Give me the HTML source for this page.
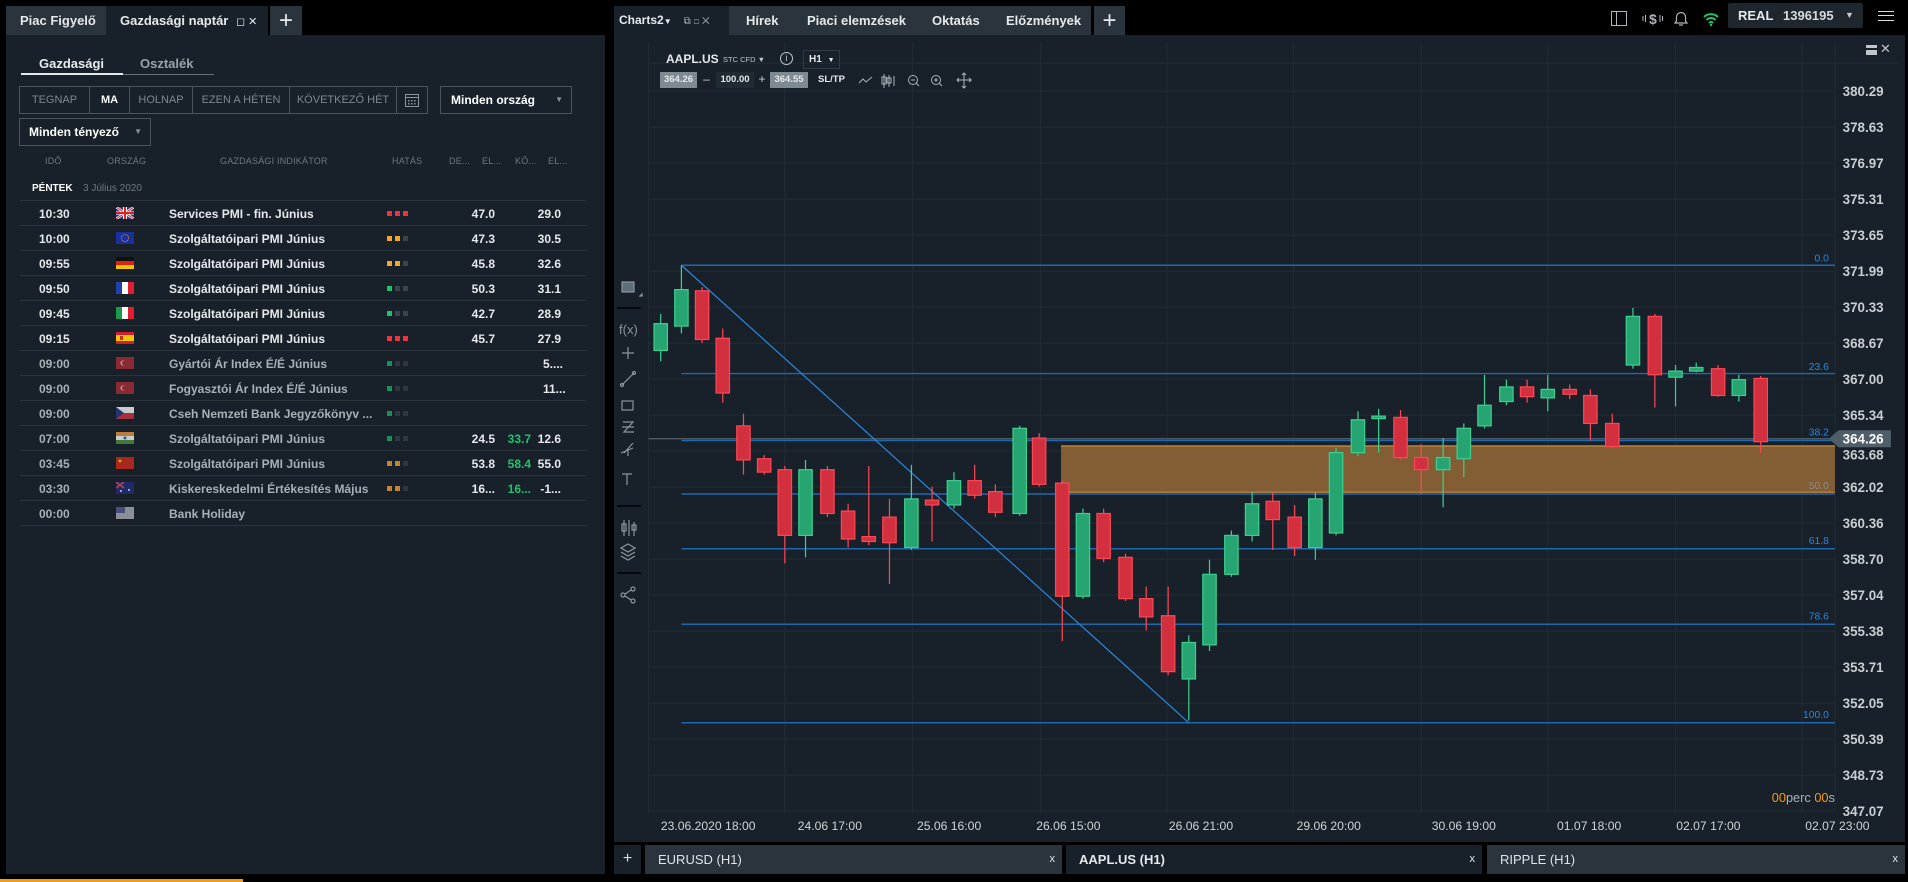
<!DOCTYPE html>
<html><head><meta charset="utf-8">
<style>
*{margin:0;padding:0;box-sizing:border-box}
body{width:1908px;height:882px;background:#000;position:relative;overflow:hidden;font-family:"Liberation Sans",sans-serif;color:#e6e9eb}
.a{position:absolute;white-space:nowrap}
.tab{position:absolute;background:#2a343c;height:29px;top:6px;font-weight:bold;font-size:13px;line-height:29px;color:#e6e9eb;white-space:nowrap}
.panel{position:absolute;background:#18212a}
.btn{position:absolute;border:1px solid #4a545c;height:28px;top:86px;font-size:11px;line-height:26px;text-align:center;color:#7e878d;white-space:nowrap;overflow:hidden}
.hd{position:absolute;top:156px;font-size:9px;color:#6e787e;letter-spacing:.2px;white-space:nowrap}
.row{position:absolute;left:20px;width:566px;height:25px;border-bottom:1px solid #2a333a}
.row span{position:absolute;top:6px;font-size:12px;font-weight:bold;white-space:nowrap}
.dots{position:absolute;top:10px;left:367px;line-height:0;font-size:0}
.dots i{display:inline-block;width:5px;height:5px;margin-right:3px}
.fl{position:absolute;left:96px;top:6px;width:18px;height:12px}
.pl{font-size:13.5px;fill:#c9ced1;font-family:"Liberation Sans",sans-serif;font-weight:bold}
.ax{font-size:10px;fill:#d0d4d6;font-family:"Liberation Sans",sans-serif}
.fb{font-size:8.5px;fill:#2a86dc;font-family:"Liberation Sans",sans-serif}
</style></head><body>

<div class="tab" style="left:6px;width:100px;padding-left:14px;color:#e6e9eb">Piac Figyelő</div>
<div class="tab" style="left:106px;width:162px;background:#18212a;padding-left:14px">Gazdasági naptár <span style="font-weight:normal;font-size:11px;margin-left:4px">&#9723;&nbsp;✕</span></div>
<div class="tab" style="left:270px;width:32px;text-align:center;font-size:24px;font-weight:normal">+</div>

<div class="panel" style="left:6px;top:35px;width:599px;height:839px"></div>
<div class="a" style="left:39px;top:56px;font-size:13px;font-weight:bold;color:#e9ecee">Gazdasági</div>
<div class="a" style="left:140px;top:56px;font-size:13px;font-weight:bold;color:#9aa2a7">Osztalék</div>
<div class="a" style="left:21px;top:73px;width:102px;height:2px;background:#e6e9eb"></div>
<div class="a" style="left:123px;top:74px;width:91px;height:1px;background:#6a737a"></div>

<div class="btn" style="left:19px;width:71px">TEGNAP</div>
<div class="btn" style="left:89px;width:41px;color:#fff;font-weight:bold">MA</div>
<div class="btn" style="left:129px;width:64px">HOLNAP</div>
<div class="btn" style="left:192px;width:98px">EZEN A HÉTEN</div>
<div class="btn" style="left:289px;width:108px">KÖVETKEZŐ HÉT</div>
<div class="btn" style="left:396px;width:32px"><svg width="16" height="16" viewBox="0 0 16 16" style="margin-top:5px"><rect x="1.5" y="2.5" width="13" height="12" fill="none" stroke="#8a9398"/><line x1="1.5" y1="5.5" x2="14.5" y2="5.5" stroke="#8a9398"/><g fill="#8a9398"><rect x="4" y="8" width="1.5" height="1.5"/><rect x="7" y="8" width="1.5" height="1.5"/><rect x="10" y="8" width="1.5" height="1.5"/><rect x="4" y="11" width="1.5" height="1.5"/><rect x="7" y="11" width="1.5" height="1.5"/><rect x="10" y="11" width="1.5" height="1.5"/></g></svg></div>
<div class="btn" style="left:440px;width:132px;text-align:left;padding-left:10px;color:#fff;font-weight:bold;font-size:12px">Minden ország<span style="position:absolute;right:8px;color:#8a9398;font-size:8px">▼</span></div>
<div class="btn" style="left:19px;top:118px;width:132px;text-align:left;padding-left:9px;color:#fff;font-weight:bold;font-size:12px">Minden tényező<span style="position:absolute;right:8px;color:#8a9398;font-size:8px">▼</span></div>

<div class="hd" style="left:45px">IDŐ</div>
<div class="hd" style="left:107px">ORSZÁG</div>
<div class="hd" style="left:220px">GAZDASÁGI INDIKÁTOR</div>
<div class="hd" style="left:392px">HATÁS</div>
<div class="hd" style="left:449px">DE...</div>
<div class="hd" style="left:482px">EL...</div>
<div class="hd" style="left:515px">KŐ...</div>
<div class="hd" style="left:548px">EL...</div>

<div class="a" style="left:32px;top:183px;font-size:10px;font-weight:bold;color:#fff">PÉNTEK</div>
<div class="a" style="left:83px;top:183px;font-size:10px;color:#6e787e">3 Július 2020</div>
<div class="a" style="left:20px;top:200px;width:566px;height:1px;background:#2a333a"></div>

<div class="row" style="top:201px"><span style="left:19px">10:30</span><svg class="fl" viewBox="0 0 18 12"><rect width="18" height="12" fill="#1f3a8a"/><path d="M0 0L18 12M18 0L0 12" stroke="#fff" stroke-width="2.5"/><path d="M0 0L18 12M18 0L0 12" stroke="#d22" stroke-width="1"/><rect x="7" width="4" height="12" fill="#fff"/><rect y="4.5" width="18" height="3" fill="#fff"/><rect x="8" width="2" height="12" fill="#d22"/><rect y="5" width="18" height="2" fill="#d22"/></svg><span style="left:149px">Services PMI - fin. Június</span><div class="dots"><i style="background:#f0323f"></i><i style="background:#f0323f"></i><i style="background:#f0323f"></i></div><span style="right:91px">47.0</span><span style="right:25px">29.0</span></div>
<div class="row" style="top:226px"><span style="left:19px">10:00</span><svg class="fl" viewBox="0 0 18 12"><rect width="18" height="12" fill="#1c2fa0"/><circle cx="9" cy="6" r="3.5" fill="none" stroke="#e8c020" stroke-width=".8" stroke-dasharray="1 1"/></svg><span style="left:149px">Szolgáltatóipari PMI Június</span><div class="dots"><i style="background:#f5a623"></i><i style="background:#f5a623"></i><i style="background:#3a444c"></i></div><span style="right:91px">47.3</span><span style="right:25px">30.5</span></div>
<div class="row" style="top:251px"><span style="left:19px">09:55</span><svg class="fl" viewBox="0 0 18 12"><rect width="18" height="4" fill="#111"/><rect y="4" width="18" height="4" fill="#d21"/><rect y="8" width="18" height="4" fill="#f5c400"/></svg><span style="left:149px">Szolgáltatóipari PMI Június</span><div class="dots"><i style="background:#f5a623"></i><i style="background:#f5a623"></i><i style="background:#3a444c"></i></div><span style="right:91px">45.8</span><span style="right:25px">32.6</span></div>
<div class="row" style="top:276px"><span style="left:19px">09:50</span><svg class="fl" viewBox="0 0 18 12"><rect width="6" height="12" fill="#2340a8"/><rect x="6" width="6" height="12" fill="#fff"/><rect x="12" width="6" height="12" fill="#e21d2d"/></svg><span style="left:149px">Szolgáltatóipari PMI Június</span><div class="dots"><i style="background:#1fc26b"></i><i style="background:#3a444c"></i><i style="background:#3a444c"></i></div><span style="right:91px">50.3</span><span style="right:25px">31.1</span></div>
<div class="row" style="top:301px"><span style="left:19px">09:45</span><svg class="fl" viewBox="0 0 18 12"><rect width="6" height="12" fill="#1a9a4a"/><rect x="6" width="6" height="12" fill="#fff"/><rect x="12" width="6" height="12" fill="#e21d2d"/></svg><span style="left:149px">Szolgáltatóipari PMI Június</span><div class="dots"><i style="background:#1fc26b"></i><i style="background:#3a444c"></i><i style="background:#3a444c"></i></div><span style="right:91px">42.7</span><span style="right:25px">28.9</span></div>
<div class="row" style="top:326px"><span style="left:19px">09:15</span><svg class="fl" viewBox="0 0 18 12"><rect width="18" height="12" fill="#d21e2b"/><rect y="3" width="18" height="6" fill="#f5c400"/><rect x="4" y="4" width="3" height="4" fill="#b33"/></svg><span style="left:149px">Szolgáltatóipari PMI Június</span><div class="dots"><i style="background:#f0323f"></i><i style="background:#f0323f"></i><i style="background:#f0323f"></i></div><span style="right:91px">45.7</span><span style="right:25px">27.9</span></div>
<div class="row" style="top:351px"><span style="left:19px;color:#a8b0b5">09:00</span><svg class="fl" viewBox="0 0 18 12"><rect width="18" height="12" fill="#8a2a33"/><circle cx="7" cy="6" r="2.5" fill="#c9a0a4"/><circle cx="7.8" cy="6" r="2" fill="#8a2a33"/></svg><span style="left:149px;color:#a8b0b5">Gyártói Ár Index É/É Június</span><div class="dots"><i style="background:#16915a"></i><i style="background:#2e383f"></i><i style="background:#2e383f"></i></div><span style="left:523px">5....</span></div>
<div class="row" style="top:376px"><span style="left:19px;color:#a8b0b5">09:00</span><svg class="fl" viewBox="0 0 18 12"><rect width="18" height="12" fill="#8a2a33"/><circle cx="7" cy="6" r="2.5" fill="#c9a0a4"/><circle cx="7.8" cy="6" r="2" fill="#8a2a33"/></svg><span style="left:149px;color:#a8b0b5">Fogyasztói Ár Index É/É Június</span><div class="dots"><i style="background:#16915a"></i><i style="background:#2e383f"></i><i style="background:#2e383f"></i></div><span style="left:523px">11...</span></div>
<div class="row" style="top:401px"><span style="left:19px;color:#a8b0b5">09:00</span><svg class="fl" viewBox="0 0 18 12"><rect width="18" height="6" fill="#c8cbd0"/><rect y="6" width="18" height="6" fill="#a8303a"/><path d="M0 0L8 6L0 12Z" fill="#25346a"/></svg><span style="left:149px;color:#a8b0b5">Cseh Nemzeti Bank Jegyzőkönyv ...</span><div class="dots"><i style="background:#16915a"></i><i style="background:#2e383f"></i><i style="background:#2e383f"></i></div></div>
<div class="row" style="top:426px"><span style="left:19px;color:#a8b0b5">07:00</span><svg class="fl" viewBox="0 0 18 12"><rect width="18" height="4" fill="#c07a3a"/><rect y="4" width="18" height="4" fill="#c8cbd0"/><rect y="8" width="18" height="4" fill="#3f7a3a"/><circle cx="9" cy="6" r="1.5" fill="#34509a"/></svg><span style="left:149px;color:#a8b0b5">Szolgáltatóipari PMI Június</span><div class="dots"><i style="background:#16915a"></i><i style="background:#2e383f"></i><i style="background:#2e383f"></i></div><span style="right:91px">24.5</span><span style="right:55px;color:#1fc26b">33.7</span><span style="right:25px">12.6</span></div>
<div class="row" style="top:451px"><span style="left:19px;color:#a8b0b5">03:45</span><svg class="fl" viewBox="0 0 18 12"><rect width="18" height="12" fill="#a8281e"/><circle cx="4" cy="4" r="1.5" fill="#c9a030"/></svg><span style="left:149px;color:#a8b0b5">Szolgáltatóipari PMI Június</span><div class="dots"><i style="background:#c0822a"></i><i style="background:#c0822a"></i><i style="background:#2e383f"></i></div><span style="right:91px">53.8</span><span style="right:55px;color:#1fc26b">58.4</span><span style="right:25px">55.0</span></div>
<div class="row" style="top:476px"><span style="left:19px;color:#a8b0b5">03:30</span><svg class="fl" viewBox="0 0 18 12"><rect width="18" height="12" fill="#1e2a6a"/><path d="M0 0L8 6M8 0L0 6" stroke="#c04050" stroke-width="1.5"/><circle cx="13" cy="8" r="1" fill="#ccc"/><circle cx="5" cy="9" r="1" fill="#ccc"/></svg><span style="left:149px;color:#a8b0b5">Kiskereskedelmi Értékesítés Május</span><div class="dots"><i style="background:#c0822a"></i><i style="background:#c0822a"></i><i style="background:#2e383f"></i></div><span style="right:91px">16...</span><span style="right:55px;color:#1fc26b">16...</span><span style="right:25px">-1...</span></div>
<div class="row" style="top:501px"><span style="left:19px;color:#a8b0b5">00:00</span><svg class="fl" viewBox="0 0 18 12"><rect width="18" height="12" fill="#8a8e96"/><rect width="9" height="6" fill="#46507a"/></svg><span style="left:149px;color:#a8b0b5">Bank Holiday</span></div>

<div class="tab" style="left:614px;width:115px;background:#18212a;font-size:12px;padding-left:5px">Charts2<span style="font-size:8px">▼</span><span style="font-weight:normal;font-size:10px;color:#aab2b7;margin-left:12px">⧉ &#9723; ✕</span></div>
<div class="tab" style="left:729px;width:362px;font-size:13px"><span style="position:absolute;left:17px">Hírek</span><span style="position:absolute;left:78px">Piaci elemzések</span><span style="position:absolute;left:203px">Oktatás</span><span style="position:absolute;left:277px">Előzmények</span></div>
<div class="tab" style="left:1094px;width:31px;text-align:center;font-size:24px;font-weight:normal">+</div>

<svg class="a" style="left:1608px;top:8px" width="120" height="22" viewBox="0 0 120 22">
<rect x="3.5" y="3.5" width="15" height="14" fill="none" stroke="#aeb5ba"/><line x1="8.5" y1="3.5" x2="8.5" y2="17.5" stroke="#aeb5ba"/>
<text x="41" y="16" font-size="14" fill="#aeb5ba" font-weight="bold" font-family="Liberation Sans">$</text><g stroke="#aeb5ba"><line x1="35" y1="8" x2="35" y2="13"/><line x1="37.5" y1="7" x2="37.5" y2="14"/><line x1="52" y1="7" x2="52" y2="14"/><line x1="54.5" y1="8" x2="54.5" y2="13"/></g>
<path d="M67 15h12l-1.5-2v-4a4.5 4.5 0 0 0-9 0v4z M71 17h4" fill="none" stroke="#aeb5ba" stroke-width="1.2"/>
<path d="M96 9a10 10 0 0 1 14 0M98.5 12a6 6 0 0 1 9 0M101 15a2.5 2.5 0 0 1 4 0" fill="none" stroke="#1fc26b" stroke-width="2"/><circle cx="103" cy="17" r="1.2" fill="#1fc26b"/>
</svg>
<div class="a" style="left:1728px;top:3px;width:135px;height:25px;background:#1e272e;border-radius:2px;font-family:'Liberation Sans',sans-serif;font-size:13px;line-height:25px"><b style="position:absolute;left:10px">REAL</b><span style="position:absolute;left:55px;font-weight:bold;color:#d8dcde">1396195</span><span style="position:absolute;left:117px;font-size:9px;color:#ccc">▼</span></div>
<div class="a" style="left:1878px;top:11px;width:16px;height:10px;border-top:1px solid #ddd;border-bottom:1px solid #ddd"></div>
<div class="a" style="left:1878px;top:15px;width:16px;height:1px;background:#ddd"></div>

<div class="panel" style="left:614px;top:35px;width:1291px;height:807px"></div>
<div class="a" style="left:610px;top:35px;width:4px;height:807px;background:#000"></div>

<svg class="a" style="left:0;top:0" width="1908" height="882">
<defs><clipPath id="c"><rect x="533" y="35" width="975" height="634"/></clipPath></defs>
<g transform="scale(1.2168)">
<g stroke="#212c34" stroke-width="0.8">
<line x1="533" y1="52" x2="1560" y2="52"/>
<line x1="533" y1="75" x2="1508" y2="75"/><line x1="533" y1="104.6" x2="1508" y2="104.6"/><line x1="533" y1="134.2" x2="1508" y2="134.2"/><line x1="533" y1="163.7" x2="1508" y2="163.7"/><line x1="533" y1="193.3" x2="1508" y2="193.3"/><line x1="533" y1="222.9" x2="1508" y2="222.9"/><line x1="533" y1="252.5" x2="1508" y2="252.5"/><line x1="533" y1="282.1" x2="1508" y2="282.1"/><line x1="533" y1="311.6" x2="1508" y2="311.6"/><line x1="533" y1="341.2" x2="1508" y2="341.2"/><line x1="533" y1="370.8" x2="1508" y2="370.8"/><line x1="533" y1="400.4" x2="1508" y2="400.4"/><line x1="533" y1="430" x2="1508" y2="430"/><line x1="533" y1="459.5" x2="1508" y2="459.5"/><line x1="533" y1="489.1" x2="1508" y2="489.1"/><line x1="533" y1="518.7" x2="1508" y2="518.7"/><line x1="533" y1="548.3" x2="1508" y2="548.3"/><line x1="533" y1="577.9" x2="1508" y2="577.9"/><line x1="533" y1="607.4" x2="1508" y2="607.4"/><line x1="533" y1="637" x2="1508" y2="637"/><line x1="533" y1="666.6" x2="1508" y2="666.6"/>
<line x1="533" y1="35" x2="533" y2="668"/><line x1="645" y1="35" x2="645" y2="668"/><line x1="750" y1="35" x2="750" y2="668"/><line x1="855" y1="35" x2="855" y2="668"/><line x1="959" y1="35" x2="959" y2="668"/><line x1="1063" y1="35" x2="1063" y2="668"/><line x1="1168" y1="35" x2="1168" y2="668"/><line x1="1272" y1="35" x2="1272" y2="668"/><line x1="1377" y1="35" x2="1377" y2="668"/><line x1="1481" y1="35" x2="1481" y2="668"/><line x1="1508" y1="35" x2="1508" y2="668"/>
</g>
<g clip-path="url(#c)">
<rect x="872" y="366" width="636" height="39" fill="#835e34"/>
<line x1="872" y1="366.5" x2="1508" y2="366.5" stroke="#c88a3a" stroke-width="1"/>
<line x1="872" y1="404.5" x2="1508" y2="404.5" stroke="#c88a3a" stroke-width="1"/>
<line x1="533" y1="360.6" x2="1508" y2="360.6" stroke="#55616a" stroke-width="1"/>
<g stroke="#1f67ad" stroke-width="1.2">
<line x1="560" y1="218" x2="1508" y2="218"/><line x1="560" y1="307" x2="1508" y2="307"/><line x1="560" y1="362" x2="1508" y2="362"/><line x1="560" y1="406" x2="1508" y2="406"/><line x1="560" y1="451" x2="1508" y2="451"/><line x1="560" y1="513" x2="1508" y2="513"/><line x1="560" y1="594" x2="1508" y2="594"/>
</g>
<line x1="560" y1="218" x2="977" y2="594" stroke="#2a86dc" stroke-width="1"/>
<g font-family="Liberation Sans"><text class="fb" x="1503" y="215" text-anchor="end">0.0</text><text class="fb" x="1503" y="304" text-anchor="end">23.6</text><text class="fb" x="1503" y="358" text-anchor="end">38.2</text><text class="fb" x="1503" y="402" text-anchor="end" style="fill:#8a8e88">50.0</text><text class="fb" x="1503" y="447" text-anchor="end">61.8</text><text class="fb" x="1503" y="509" text-anchor="end">78.6</text><text class="fb" x="1503" y="590" text-anchor="end">100.0</text></g>
<g stroke="#3bd08f" fill="#26a472" stroke-width="1">
<line x1="543" y1="258" x2="543" y2="297"/><rect x="537.5" y="266" width="11" height="22"/>
<line x1="560" y1="218" x2="560" y2="274"/><rect x="554.5" y="238" width="11" height="30"/>
<line x1="662" y1="378" x2="662" y2="458"/><rect x="656.5" y="386" width="11" height="54"/>
<line x1="749" y1="382" x2="749" y2="452"/><rect x="743.5" y="410" width="11" height="40"/>
<line x1="784" y1="388" x2="784" y2="418"/><rect x="778.5" y="395" width="11" height="20"/>
<line x1="838" y1="350" x2="838" y2="424"/><rect x="832.5" y="352" width="11" height="70"/>
<line x1="890" y1="418" x2="890" y2="492"/><rect x="884.5" y="422" width="11" height="68"/>
<line x1="977" y1="522" x2="977" y2="592"/><rect x="971.5" y="528" width="11" height="30"/>
<line x1="994" y1="460" x2="994" y2="535"/><rect x="988.5" y="472" width="11" height="58"/>
<line x1="1012" y1="436" x2="1012" y2="474"/><rect x="1006.5" y="440" width="11" height="32"/>
<line x1="1029" y1="404" x2="1029" y2="445"/><rect x="1023.5" y="414" width="11" height="26"/>
<line x1="1081" y1="405" x2="1081" y2="460"/><rect x="1075.5" y="410" width="11" height="40"/>
<line x1="1098" y1="368" x2="1098" y2="440"/><rect x="1092.5" y="372" width="11" height="66"/>
<line x1="1116" y1="338" x2="1116" y2="375"/><rect x="1110.5" y="345" width="11" height="27"/>
<line x1="1133" y1="336" x2="1133" y2="372"/><rect x="1127.5" y="342" width="11" height="2"/>
<line x1="1186" y1="360" x2="1186" y2="417"/><rect x="1180.5" y="376" width="11" height="10"/>
<line x1="1203" y1="348" x2="1203" y2="392"/><rect x="1197.5" y="352" width="11" height="25"/>
<line x1="1220" y1="308" x2="1220" y2="352"/><rect x="1214.5" y="333" width="11" height="17"/>
<line x1="1238" y1="312" x2="1238" y2="333"/><rect x="1232.5" y="318" width="11" height="12"/>
<line x1="1272" y1="308" x2="1272" y2="338"/><rect x="1266.5" y="320" width="11" height="7"/>
<line x1="1342" y1="253" x2="1342" y2="303"/><rect x="1336.5" y="260" width="11" height="40"/>
<line x1="1377" y1="300" x2="1377" y2="334"/><rect x="1371.5" y="305" width="11" height="5"/>
<line x1="1394" y1="298" x2="1394" y2="306"/><rect x="1388.5" y="302" width="11" height="3"/>
<line x1="1429" y1="308" x2="1429" y2="330"/><rect x="1423.5" y="312" width="11" height="13"/>
</g>
<g stroke="#ff4656" fill="#d22f3f" stroke-width="1">
<line x1="577" y1="236" x2="577" y2="282"/><rect x="571.5" y="239" width="11" height="40"/>
<line x1="594" y1="270" x2="594" y2="331"/><rect x="588.5" y="278" width="11" height="45"/>
<line x1="611" y1="340" x2="611" y2="390"/><rect x="605.5" y="350" width="11" height="28"/>
<line x1="628" y1="374" x2="628" y2="390"/><rect x="622.5" y="377" width="11" height="11"/>
<line x1="645" y1="383" x2="645" y2="463"/><rect x="639.5" y="386" width="11" height="54"/>
<line x1="680" y1="383" x2="680" y2="425"/><rect x="674.5" y="386" width="11" height="36"/>
<line x1="697" y1="414" x2="697" y2="450"/><rect x="691.5" y="420" width="11" height="23"/>
<line x1="714" y1="383" x2="714" y2="448"/><rect x="708.5" y="441" width="11" height="4"/>
<line x1="731" y1="410" x2="731" y2="480"/><rect x="725.5" y="425" width="11" height="21"/>
<line x1="766" y1="400" x2="766" y2="445"/><rect x="760.5" y="411" width="11" height="4"/>
<line x1="801" y1="382" x2="801" y2="410"/><rect x="795.5" y="395" width="11" height="12"/>
<line x1="818" y1="398" x2="818" y2="425"/><rect x="812.5" y="404" width="11" height="17"/>
<line x1="854" y1="356" x2="854" y2="400"/><rect x="848.5" y="360" width="11" height="38"/>
<line x1="873" y1="395" x2="873" y2="527"/><rect x="867.5" y="397" width="11" height="93"/>
<line x1="907" y1="418" x2="907" y2="462"/><rect x="901.5" y="422" width="11" height="37"/>
<line x1="925" y1="455" x2="925" y2="494"/><rect x="919.5" y="458" width="11" height="34"/>
<line x1="942" y1="482" x2="942" y2="518"/><rect x="936.5" y="492" width="11" height="15"/>
<line x1="960" y1="482" x2="960" y2="555"/><rect x="954.5" y="506" width="11" height="46"/>
<line x1="1046" y1="405" x2="1046" y2="452"/><rect x="1040.5" y="412" width="11" height="15"/>
<line x1="1064" y1="415" x2="1064" y2="457"/><rect x="1058.5" y="425" width="11" height="25"/>
<line x1="1151" y1="337" x2="1151" y2="378"/><rect x="1145.5" y="343" width="11" height="33"/>
<line x1="1168" y1="365" x2="1168" y2="406"/><rect x="1162.5" y="376" width="11" height="10"/>
<line x1="1255" y1="312" x2="1255" y2="331"/><rect x="1249.5" y="318" width="11" height="8"/>
<line x1="1290" y1="316" x2="1290" y2="328"/><rect x="1284.5" y="320" width="11" height="4"/>
<line x1="1307" y1="320" x2="1307" y2="362"/><rect x="1301.5" y="325" width="11" height="23"/>
<line x1="1325" y1="340" x2="1325" y2="368"/><rect x="1319.5" y="348" width="11" height="19"/>
<line x1="1360" y1="258" x2="1360" y2="335"/><rect x="1354.5" y="260" width="11" height="48"/>
<line x1="1412" y1="300" x2="1412" y2="326"/><rect x="1406.5" y="303" width="11" height="22"/>
<line x1="1447" y1="309" x2="1447" y2="372"/><rect x="1441.5" y="311" width="11" height="52"/>
</g>
</g>
<g>
<text class="pl" style="font-size:11px" x="1548" y="79" text-anchor="end">380.29</text><text class="pl" style="font-size:11px" x="1548" y="108.6" text-anchor="end">378.63</text><text class="pl" style="font-size:11px" x="1548" y="138.2" text-anchor="end">376.97</text><text class="pl" style="font-size:11px" x="1548" y="167.7" text-anchor="end">375.31</text><text class="pl" style="font-size:11px" x="1548" y="197.3" text-anchor="end">373.65</text><text class="pl" style="font-size:11px" x="1548" y="226.9" text-anchor="end">371.99</text><text class="pl" style="font-size:11px" x="1548" y="256.5" text-anchor="end">370.33</text><text class="pl" style="font-size:11px" x="1548" y="286.1" text-anchor="end">368.67</text><text class="pl" style="font-size:11px" x="1548" y="315.6" text-anchor="end">367.00</text><text class="pl" style="font-size:11px" x="1548" y="345.2" text-anchor="end">365.34</text><text class="pl" style="font-size:11px" x="1548" y="377.8" text-anchor="end">363.68</text><text class="pl" style="font-size:11px" x="1548" y="404.4" text-anchor="end">362.02</text><text class="pl" style="font-size:11px" x="1548" y="434" text-anchor="end">360.36</text><text class="pl" style="font-size:11px" x="1548" y="463.5" text-anchor="end">358.70</text><text class="pl" style="font-size:11px" x="1548" y="493.1" text-anchor="end">357.04</text><text class="pl" style="font-size:11px" x="1548" y="522.7" text-anchor="end">355.38</text><text class="pl" style="font-size:11px" x="1548" y="552.3" text-anchor="end">353.71</text><text class="pl" style="font-size:11px" x="1548" y="581.9" text-anchor="end">352.05</text><text class="pl" style="font-size:11px" x="1548" y="611.4" text-anchor="end">350.39</text><text class="pl" style="font-size:11px" x="1548" y="641" text-anchor="end">348.73</text><text class="pl" style="font-size:11px" x="1548" y="670.6" text-anchor="end">347.07</text>
</g>
<path d="M1503 360.6L1511 353.6H1554V367.6H1511Z" fill="#4f5e68"/>
<text class="pl" style="font-size:11px;fill:#fff" x="1548" y="364.6" text-anchor="end">364.26</text>
<g>
<text class="ax" x="582" y="682" text-anchor="middle">23.06.2020 18:00</text><text class="ax" x="682" y="682" text-anchor="middle">24.06 17:00</text><text class="ax" x="780" y="682" text-anchor="middle">25.06 16:00</text><text class="ax" x="878" y="682" text-anchor="middle">26.06 15:00</text><text class="ax" x="987" y="682" text-anchor="middle">26.06 21:00</text><text class="ax" x="1092" y="682" text-anchor="middle">29.06 20:00</text><text class="ax" x="1203" y="682" text-anchor="middle">30.06 19:00</text><text class="ax" x="1306" y="682" text-anchor="middle">01.07 18:00</text><text class="ax" x="1404" y="682" text-anchor="middle">02.07 17:00</text><text class="ax" x="1510" y="682" text-anchor="middle">02.07 23:00</text>
</g>
<text x="1508" y="659" text-anchor="end" font-size="10.5" font-family="Liberation Sans" fill="#aab2b7"><tspan fill="#f39c12">00</tspan>perc <tspan fill="#f39c12">00</tspan>s</text>
</g>
</svg>

<div class="a" style="left:666px;top:52px;font-size:12px;font-weight:bold">AAPL.US</div>
<div class="a" style="left:723px;top:55px;font-size:7.5px;color:#c0c6ca">STC CFD <span>▼</span></div>
<div class="a" style="left:780px;top:52px;width:13px;height:13px;border:1px solid #c0c6ca;border-radius:50%;font-size:9px;text-align:center;line-height:11px;color:#c0c6ca">i</div>
<div class="a" style="left:803px;top:50px;width:37px;height:19px;border:1px solid #2f3a42;font-size:10px;font-weight:bold;padding-left:5px;line-height:17px">H1 <span style="font-size:7px;margin-left:3px">▼</span></div>
<div class="a" style="left:660px;top:72px;width:37px;height:16px;background:#7d8a92;font-size:9.5px;font-weight:bold;text-align:center;line-height:16px">364.26</div>
<div class="a" style="left:697px;top:72px;width:19px;height:16px;font-size:12px;text-align:center;line-height:15px;color:#ccc">–</div>
<div class="a" style="left:716px;top:72px;width:38px;height:16px;background:#1f2a31;font-size:9.5px;font-weight:bold;text-align:center;line-height:16px">100.00</div>
<div class="a" style="left:754px;top:72px;width:16px;height:16px;font-size:12px;text-align:center;line-height:15px;color:#ccc">+</div>
<div class="a" style="left:770px;top:72px;width:38px;height:16px;background:#7d8a92;font-size:9.5px;font-weight:bold;text-align:center;line-height:16px">364.55</div>
<div class="a" style="left:818px;top:74px;font-size:9.5px;font-weight:bold">SL/TP</div>
<svg class="a" style="left:858px;top:72px" width="120" height="18" viewBox="0 0 120 18" fill="none" stroke="#aab2b7">
<path d="M1 11l4-4 3 3 6-5"/>
<path d="M26 2v14M24 5h4v7h-4zM31 3v12M29 6h4v5h-4zM36 4v10"/>
<circle cx="55" cy="8" r="4.5"/><path d="M58 11l3 3M53 8h4"/>
<circle cx="78" cy="8" r="4.5"/><path d="M81 11l3 3M76 8h4M78 6v4"/>
<path d="M106 1v15M99 8h15M104 3l2-2 2 2M104 14l2 2 2-2M101 6l-2 2 2 2M111 6l2 2-2 2"/>
</svg>
<div class="a" style="left:1866px;top:45px;width:11px;height:10px;background:#c0c6ca"></div>
<div class="a" style="left:1866px;top:48px;width:11px;height:2px;background:#18212a"></div>
<div class="a" style="left:1880px;top:41px;font-size:13px;color:#c0c6ca">✕</div>

<svg class="a" style="left:614px;top:270px" width="30" height="340" viewBox="0 0 30 340" fill="none" stroke="#8a959c" stroke-width="1.2">
<rect x="8" y="12" width="12" height="10" fill="#5e6e78"/><path d="M26 26l2 0 0-2z" fill="#8a959c"/>
<line x1="3" y1="38" x2="27" y2="38" stroke="#000" stroke-width="1.5"/>
<text x="5" y="64" font-size="13" fill="#8a959c" stroke="none" font-family="Liberation Sans">f(x)</text>
<path d="M14 77v12M8 83h12"/>
<path d="M8 115l12-12"/><circle cx="8" cy="115" r="1.5"/><circle cx="20" cy="103" r="1.5"/>
<rect x="8" y="131" width="11" height="9"/>
<path d="M9 152h10l-9 10h10M8 157h12"/>
<path d="M7 183l12-5M10 183l9-10M14 178v8"/>
<path d="M8 204h10M13 204v11"/>
<line x1="3" y1="236" x2="27" y2="236" stroke="#000" stroke-width="1.5"/>
<path d="M10 250v16M15 250v16M20 252v14M8 254h4v7h-4zM18 255h4v5h-4z"/>
<path d="M14 274l7 4-7 4-7-4zM7 282l7 4 7-4M7 286l7 4 7-4"/>
<line x1="3" y1="303" x2="27" y2="303" stroke="#000" stroke-width="1.5"/>
<circle cx="9" cy="325" r="2"/><circle cx="19" cy="319" r="2"/><circle cx="19" cy="331" r="2"/><path d="M11 324l6-4M11 326l6 4"/>
</svg>

<div class="a" style="left:614px;top:845px;width:27px;height:29px;background:#18212a;color:#ddd;text-align:center;font-size:16px;line-height:28px">+</div>
<div class="a" style="left:645px;top:845px;width:417px;height:29px;background:#2a343c;font-size:13px;line-height:29px;padding-left:13px;color:#e0e4e6">EURUSD (H1)<span style="position:absolute;right:7px;font-size:11px">x</span></div>
<div class="a" style="left:1066px;top:845px;width:416px;height:29px;background:#18212a;font-size:13px;line-height:29px;padding-left:13px;font-weight:bold">AAPL.US (H1)<span style="position:absolute;right:7px;font-size:11px;font-weight:normal">x</span></div>
<div class="a" style="left:1487px;top:845px;width:418px;height:29px;background:#2a343c;font-size:13px;line-height:29px;padding-left:13px;color:#e0e4e6">RIPPLE (H1)<span style="position:absolute;right:7px;font-size:11px">x</span></div>

<div class="a" style="left:0;top:879px;width:243px;height:3px;background:#f39c12"></div>
</body></html>
